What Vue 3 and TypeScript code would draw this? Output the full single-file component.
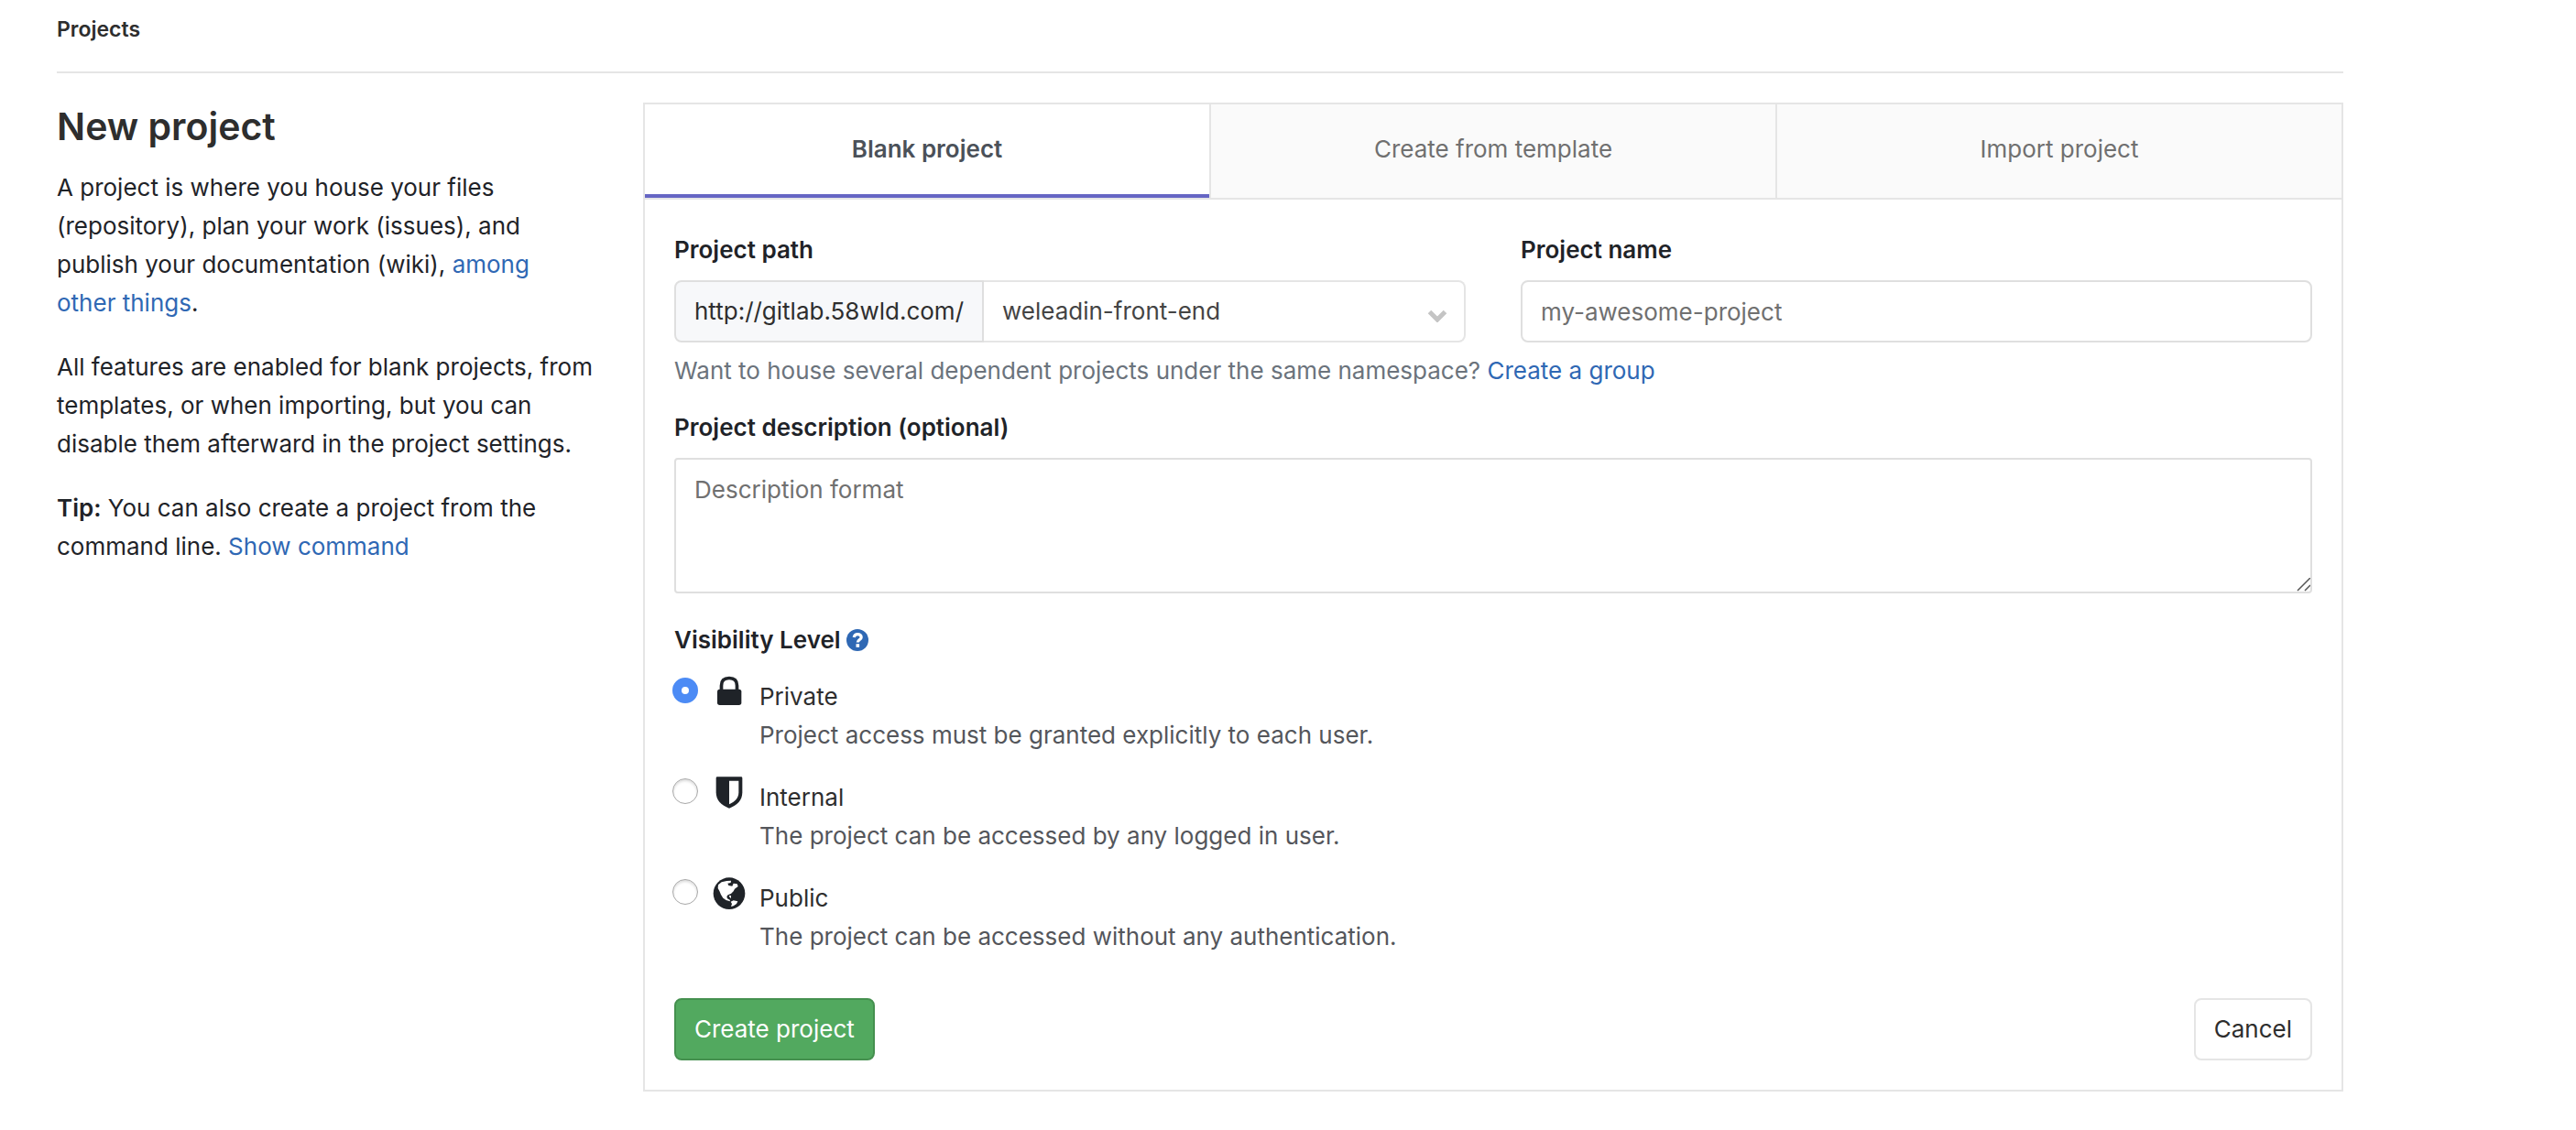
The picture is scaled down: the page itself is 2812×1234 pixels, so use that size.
<script setup lang="ts">
import { ref } from 'vue'

type Visibility = 'private' | 'internal' | 'public'

interface VisibilityOption {
  value: Visibility
  title: string
  help: string
}

const tabs: string[] = ['Blank project', 'Create from template', 'Import project']
const activeTab = ref<string>('Blank project')

const namespace = ref<string>('weleadin-front-end')
const projectName = ref<string>('')
const description = ref<string>('')
const visibility = ref<Visibility>('private')

const options: VisibilityOption[] = [
  {
    value: 'private',
    title: 'Private',
    help: 'Project access must be granted explicitly to each user.',
  },
  {
    value: 'internal',
    title: 'Internal',
    help: 'The project can be accessed by any logged in user.',
  },
  {
    value: 'public',
    title: 'Public',
    help: 'The project can be accessed without any authentication.',
  },
]
</script>

<template>
  <div class="page">
    <header class="breadcrumbs">
      <h2 class="breadcrumb-title">Projects</h2>
    </header>

    <div class="columns">
      <aside class="intro">
        <h1 class="intro-title">New project</h1>
        <p>
          A project is where you house your files (repository), plan your work (issues), and publish
          your documentation (wiki), <a href="#">among other&nbsp;things</a>.
        </p>
        <p>
          All features are enabled for blank projects, from templates, or when importing, but you can
          disable them afterward in the project settings.
        </p>
        <p>
          <strong>Tip:</strong> You can also create a project from the command line.
          <a href="#">Show command</a>
        </p>
      </aside>

      <main class="card">
        <nav class="tabs">
          <a
            v-for="tab in tabs"
            :key="tab"
            href="#"
            class="tab"
            :class="{ active: tab === activeTab }"
            @click.prevent="activeTab = tab"
            >{{ tab }}</a
          >
        </nav>

        <form class="pane" @submit.prevent>
          <div class="field-row">
            <div class="field">
              <label class="field-label" for="namespace">Project path</label>
              <div class="input-group">
                <span class="addon">http://gitlab.58wld.com/</span>
                <div class="select-wrap">
                  <select id="namespace" v-model="namespace" class="control select">
                    <option value="weleadin-front-end">weleadin-front-end</option>
                  </select>
                  <svg class="chevron" viewBox="0 0 22 14" aria-hidden="true">
                    <path d="M2.5 2.5 L11 11 L19.5 2.5" />
                  </svg>
                </div>
              </div>
            </div>
            <div class="field">
              <label class="field-label" for="project-name">Project name</label>
              <input
                id="project-name"
                v-model="projectName"
                class="control"
                type="text"
                placeholder="my-awesome-project"
              />
            </div>
          </div>
          <p class="hint">
            Want to house several dependent projects under the same namespace?
            <a href="#">Create a group</a>
          </p>

          <div class="field description">
            <label class="field-label" for="description">Project description (optional)</label>
            <textarea
              id="description"
              v-model="description"
              class="control textarea"
              placeholder="Description format"
            ></textarea>
          </div>

          <fieldset class="visibility">
            <legend>
              Visibility Level
              <a href="#" class="help" aria-label="Help">
                <svg viewBox="0 0 24 24" aria-hidden="true">
                  <circle cx="12" cy="12" r="12" fill="#2f68b4" />
                  <path
                    d="M8.2 9 C8.6 6.6 10.2 5.6 12.2 5.6 C14.6 5.6 16.2 7 16.2 8.9 C16.2 11.6 12.3 11.4 12.3 14.6"
                    fill="none"
                    stroke="#fff"
                    stroke-width="3.2"
                  />
                  <rect x="10.5" y="16.2" width="3.6" height="3.6" fill="#fff" />
                </svg>
              </a>
            </legend>

            <div v-for="option in options" :key="option.value" class="option">
              <input
                :id="`visibility-${option.value}`"
                v-model="visibility"
                class="radio"
                type="radio"
                name="visibility"
                :value="option.value"
              />
              <svg class="option-icon" viewBox="0 0 108 108" aria-hidden="true">
                <template v-if="option.value === 'private'">
                  <rect x="15" y="44" width="79" height="52" rx="8" fill="#1f2328" />
                  <path
                    d="M28.5 50 V32 C28.5 16 38 7.5 54 7.5 C70 7.5 79.5 16 79.5 32 V50"
                    fill="none"
                    stroke="#1f2328"
                    stroke-width="11"
                  />
                </template>
                <template v-else-if="option.value === 'internal'">
                  <path
                    d="M15 1 H93 Q97 1 97 5 V52 C97 78 80 95 54 104 C28 95 11 78 11 52 V5 Q11 1 15 1 Z"
                    fill="#1f2328"
                  />
                  <path d="M54 14 H85 V52 C85 69 75 82 54 91 Z" fill="#fff" />
                </template>
                <template v-else>
                  <circle cx="54" cy="53" r="52" fill="#1f2328" />
                  <path
                    d="M18 25 L29 16 L46 12 L60 11 L59 18 L49 20 L52 27 L64 29 L68 20 L80 22 L83 30 L72 38 L68 46 L60 54 L50 58 L46 63 L48 70 L56 74 L57 79 L44 75 L34 68 L27 57 L22 45 L17 36 Z"
                    fill="#fff"
                  />
                  <path d="M59 80 L68 76 L82 79 L78 87 L68 94 L60 96 L63 87 Z" fill="#fff" />
                  <path d="M53 60 L60 60 L60 69 L56 66 Z" fill="#fff" />
                </template>
              </svg>
              <div class="option-text">
                <label :for="`visibility-${option.value}`">{{ option.title }}</label>
                <p>{{ option.help }}</p>
              </div>
            </div>
          </fieldset>

          <div class="actions">
            <button type="submit" class="btn btn-create">Create project</button>
            <button type="button" class="btn btn-cancel">Cancel</button>
          </div>
        </form>
      </main>
    </div>
  </div>
</template>

<style>
body {
  background: #fff;
}
</style>

<style scoped>
.page {
  box-sizing: border-box;
  max-width: 2620px;
  padding: 0 62px 42px;
  font-family: Inter, 'Liberation Sans', sans-serif;
  font-size: 26px;
  line-height: 42px;
  color: #1f2328;
}

.page * {
  box-sizing: border-box;
}

a {
  color: #2f68b4;
  text-decoration: none;
}

p {
  margin: 0;
}

.breadcrumbs {
  display: flex;
  height: 80px;
  padding-top: 11px;
  border-bottom: 2px solid #e5e5e5;
}

.breadcrumb-title {
  margin: 0;
  font-size: 23px;
  font-weight: 600;
  color: #2e2e2e;
}

.columns {
  display: flex;
  align-items: flex-start;
  gap: 50px;
  padding-top: 32px;
}

.intro {
  flex: 0 0 calc(25% - 34px);
}

.intro-title {
  margin: 0 0 20px;
  font-size: 41px;
  font-weight: 600;
  line-height: 52px;
  color: #2e2e2e;
}

.intro p {
  margin-bottom: 28px;
}

.intro strong {
  font-weight: 600;
}

.card {
  flex: 1;
  min-width: 0;
  border: 2px solid #e5e5e5;
}

.tabs {
  display: flex;
  border-bottom: 2px solid #e5e5e5;
}

.tab {
  flex: 1;
  height: 102px;
  padding: 28px 0;
  border-right: 2px solid #e5e5e5;
  background: #fafafa;
  text-align: center;
  color: #707070;
}

.tab:last-child {
  border-right: 0;
}

.tab.active {
  background: #fff;
  box-shadow: inset 0 -4px #6666c4;
  font-weight: 600;
  color: #4b5159;
}

.pane {
  padding: 34px 32px 32px;
}

.field-row {
  display: flex;
  gap: 60px;
}

.field {
  display: flex;
  flex: 1;
  flex-direction: column;
  gap: 12px;
}

.field-label {
  font-weight: 600;
}

.input-group {
  display: flex;
}

.addon {
  display: flex;
  align-items: center;
  justify-content: center;
  flex: 0 0 338px;
  height: 68px;
  border: 2px solid #dfdfdf;
  border-radius: 8px 0 0 8px;
  background: #f7f8fa;
  color: #2e2e2e;
}

.select-wrap {
  position: relative;
  flex: 1;
}

.control {
  display: block;
  width: 100%;
  height: 68px;
  margin: 0;
  padding: 0 20px;
  border: 2px solid #dfdfdf;
  border-radius: 8px;
  outline: 0;
  background: #fff;
  font: inherit;
  color: #2e2e2e;
}

.control::placeholder {
  color: #707070;
  opacity: 1;
}

.select {
  appearance: none;
  border-color: #e5e5e5;
  border-left: 0;
  border-radius: 0 8px 8px 0;
  color: #444;
}

.chevron {
  position: absolute;
  top: 32px;
  right: 20px;
  width: 22px;
  height: 14px;
  fill: none;
  stroke: #c4c4c4;
  stroke-width: 5;
  pointer-events: none;
}

.hint {
  margin-top: 10px;
  color: #6b737c;
}

.description {
  margin-top: 20px;
}

.textarea {
  height: 148px;
  padding: 12px 20px;
  border-radius: 4px;
  resize: vertical;
}

.textarea::-webkit-resizer {
  background: url("data:image/svg+xml,%3Csvg xmlns='http://www.w3.org/2000/svg' width='15' height='15'%3E%3Cpath d='M1 14 L15 0 M9 14 L15 8' stroke='%23555' stroke-width='1.5'/%3E%3C/svg%3E")
    no-repeat right bottom;
}

.visibility {
  min-width: 0;
  margin: 28px 0 0;
  padding: 0;
  border: 0;
}

.visibility legend {
  display: flex;
  align-items: center;
  gap: 6px;
  margin-bottom: 18px;
  padding: 2px 0 0;
  font-weight: 600;
}

.help,
.help svg {
  display: block;
  width: 24px;
  height: 24px;
}

.option {
  display: flex;
  align-items: flex-start;
  margin: 0 0 24px -2px;
}

.radio {
  appearance: none;
  width: 28px;
  height: 28px;
  margin: 2px 16px 0 0;
  border: 1px solid #a8a8a8;
  border-radius: 50%;
  background: #fff;
  box-shadow: inset 0 2px 3px #dcdcdc;
}

.radio:checked {
  border: 10px solid #4c8bf5;
  box-shadow: none;
}

.option-icon {
  width: 36px;
  height: 36px;
  margin-right: 15px;
}

.option-text {
  padding-top: 2px;
}

.option-text label {
  display: block;
  color: #2e2e2e;
}

.option-text p {
  color: #54565b;
}

.actions {
  display: flex;
  justify-content: space-between;
  padding-top: 22px;
}

.btn {
  height: 68px;
  padding: 0 20px;
  border: 2px solid #e5e5e5;
  border-radius: 8px;
  background: #fff;
  font: inherit;
  color: #2e2e2e;
}

.btn-create {
  border-color: #45904f;
  background: #52a95f;
  color: #fff;
}
</style>
